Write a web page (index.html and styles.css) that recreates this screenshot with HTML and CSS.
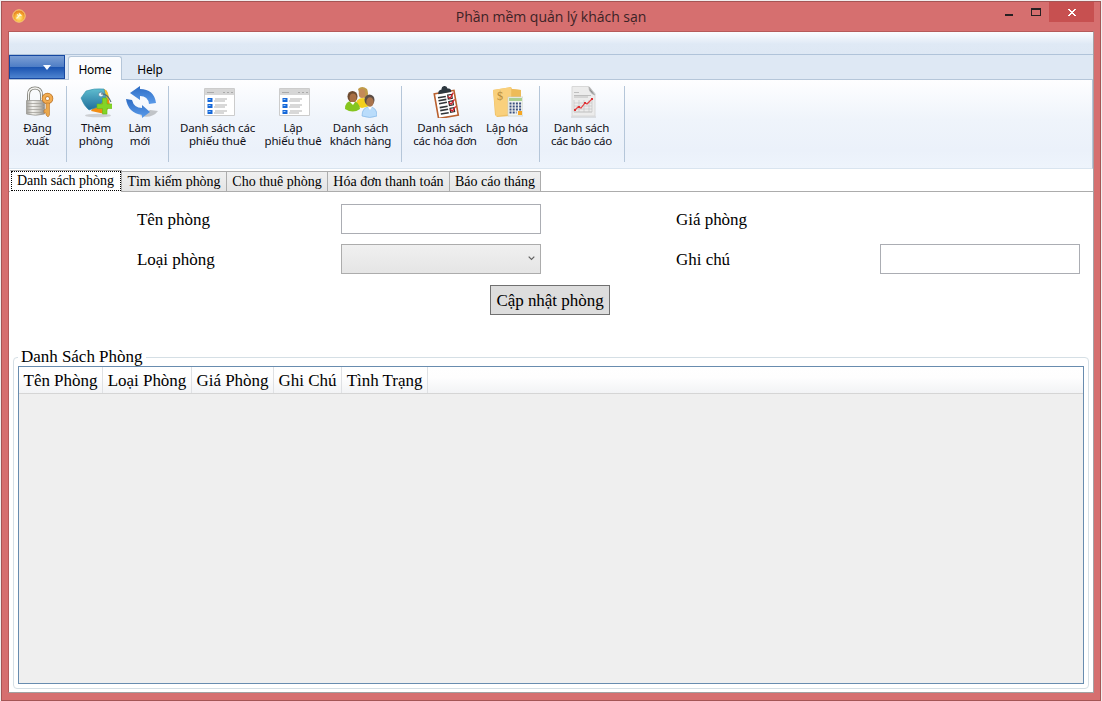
FILE: index.html
```html
<!DOCTYPE html>
<html lang="vi">
<head>
<meta charset="utf-8">
<title>Phần mềm quản lý khách sạn</title>
<link rel="stylesheet" href="styles.css">
</head>
<body>
<div class="window">
  <header class="titlebar">
    <svg class="app-icon" width="14" height="14" viewBox="0 0 14 14"><defs><radialGradient id="orb" cy=".65"><stop offset="0" stop-color="#fff08a"/><stop offset=".65" stop-color="#f9b536"/><stop offset="1" stop-color="#e98925"/></radialGradient></defs><circle cx="7" cy="7" r="6.2" fill="url(#orb)" stroke="#f7cf7c"/><path d="M4.500 9.500l4-4M7 4.500l2.500 2.500M5 5.500l1.500 1" stroke="#fff7d5" stroke-width="1.200"/></svg>
    <h1 class="title">Phần mềm quản lý khách sạn</h1>
    <svg class="controls" width="89" height="21" viewBox="0 0 89 21" shape-rendering="crispEdges"><path fill="#272022" d="M0 13h8v2H0z"/><path fill="#272022" fill-rule="evenodd" d="M26 7h10v8H26zM27 9v5h8V9z"/><path fill="#c75050" d="M44 1h45v20H44z"/><path fill="#fff" d="M63 8h2v1h1v1h2V9h1V8h2v1h-1v1h-1v1h-1v1h1v1h1v1h1v1h-2v-1h-1v-1h-2v1h-1v1h-2v-1h1v-1h1v-1h1v-1h-1v-1h-1V9h-1z"/></svg>
  </header>
  <main class="client">
    <div class="quickbar"></div>
    <nav class="ribbon-tabs">
      <button class="app-menu"><svg width="8" height="5" viewBox="0 0 8 5"><path d="M0 0h8L4 5z" fill="#f7faff"/></svg></button>
      <span class="rtab active">Home</span>
      <span class="rtab">Help</span>
    </nav>
    <section class="ribbon">
      <div class="group g-logout">
        <div class="tool">
          <svg width="32" height="32" viewBox="0 0 32 32"><defs><linearGradient id="steel"><stop stop-color="#a09e99"/><stop offset=".35" stop-color="#f3f2ee"/><stop offset=".7" stop-color="#c9c7c1"/><stop offset="1" stop-color="#8b8984"/></linearGradient></defs><path d="M6.500 15V9q0-7 6.500-7t6.500 7v6" fill="none" stroke="#77776f" stroke-width="3"/><path d="M6.500 15V9q0-7 6.500-7t6.500 7v6" fill="none" stroke="#f3f3f0" stroke-width="1.400"/><path d="M4.500 14.500h18V28q-9 2.500-18 0z" fill="url(#steel)" stroke="#9b9994" stroke-width=".8"/><path d="M5 17.500h17M5 20.500h17M5 23.500h17M5 26.500h17" stroke="#a3a19b" stroke-width=".8"/><circle cx="25.500" cy="12.500" r="3.700" fill="none" stroke="#b9742b" stroke-width="4.200"/><circle cx="25.500" cy="12.500" r="3.700" fill="none" stroke="#f3ad52" stroke-width="2.800"/><path d="M24 17h3.500v12l-1.500 2-2-2v-2h-2v-3l2-1z" fill="#eba84c" stroke="#b9742b" stroke-width=".6"/></svg>
          <p>Đăng<br>xuất</p>
        </div>
      </div>
      <div class="group g-rooms">
        <div class="tool w58">
          <svg width="32" height="32" viewBox="0 0 32 32"><defs><linearGradient id="tag" x2="0" y2="1"><stop stop-color="#5fbdcf"/><stop offset="1" stop-color="#1f6d9b"/></linearGradient></defs><ellipse cx="18" cy="29.500" rx="13" ry="1.800" fill="#aaa" opacity=".5"/><path d="M24 3l3 2 3 14-5 9-14-3z" fill="#f28c12"/><path d="M24 3q4 2 5 8l-3 4z" fill="#f9c52b"/><path d="M1 12L6 5q8-3 18-2l2 9-8 9-9 3q-5-4-8-12z" fill="url(#tag)" stroke="#3391ab" stroke-width=".6"/><circle cx="21" cy="8.500" r="2.500" fill="#eaf5fa" stroke="#5794ab"/><path d="M21 8q6-1 10 8" fill="none" stroke="#556e79" stroke-width="1.100"/><path d="M22.500 12h4.500v6h5.500v4.500H27V28h-4.500v-5.500H17V18h5.500z" fill="#83d427" stroke="#6ab91a" stroke-width=".6"/></svg>
          <p>Thêm<br>phòng</p>
        </div>
        <div class="tool w30">
          <svg class="sync" width="32" height="32" viewBox="0 0 32 32"><defs><linearGradient id="sync" x2="0" y2="1"><stop stop-color="#2d6cc4"/><stop offset="1" stop-color="#5a9bea"/></linearGradient></defs><path d="M14 30q12 3 18-5l-8-1z" fill="#8f9294" opacity=".5"/><path d="M4 7l10-7v3q14 0 16 14l-7 1q-1-8-9-8v4z" fill="url(#sync)"/><path d="M0 13l6 1q2 8 10 8v-3l8 7-8 6v-3Q2 27 0 13z" fill="url(#sync)"/></svg>
          <p>Làm<br>mới</p>
        </div>
      </div>
      <div class="group g-rent">
        <div class="tool w83">
          <svg class="nudge" width="32" height="32" viewBox="0 0 32 32"><g id="form"><path d="M1.500 2.500h30v27h-30z" fill="#fff" stroke="#ccc"/><path d="M2 3h29v6H2z" fill="#d6d6d6"/><path d="M4 6.500h7M20 6.500h2M24 6.500h2M28 6.500h2" stroke="#aaa"/><path d="M4.500 12h5v4h-5zM4.500 18h5v4h-5zM4.500 24h5v4h-5z" fill="#1668d9"/><path d="M5.500 13h2v1h-2zM5.500 19h2v1h-2zM5.500 25h2v1h-2z" fill="#9cc9f7"/><path d="M12 13h12M11 15h11M12 19h12M11 21h11M12 25h12M11 27h10" stroke="#ccc" stroke-width="1.400"/></g></svg>
          <p>Danh sách các<br>phiếu thuê</p>
        </div>
        <div class="tool w68">
          <svg class="nudge" width="32" height="32" viewBox="0 0 32 32"><use href="#form"/></svg>
          <p>Lập<br>phiếu thuê</p>
        </div>
        <div class="tool w67">
          <svg width="32" height="32" viewBox="0 0 32 32"><path d="M10 20q1-8 8-8t7 8l-8 2z" fill="#f3cf1d"/><path d="M13 3q4-4 9 0 2 4 0 10l-7-3z" fill="#bf9a48"/><ellipse cx="17" cy="7.500" rx="3.300" ry="4.500" fill="#c48a57"/><path d="M0 23q0-8 7-8t8 8q-7 5-15 0z" fill="#86c51f"/><ellipse cx="7.500" cy="10.500" rx="5" ry="5.500" fill="#6e4b30"/><ellipse cx="8" cy="12" rx="3.500" ry="4.500" fill="#a96f44"/><path d="M17 30q0-9 7.500-9t7.500 9q-7 3-15 0z" fill="#b9dcfb" stroke="#82b6e6" stroke-width=".7"/><ellipse cx="24.500" cy="14" rx="5" ry="5.500" fill="#5b4d46"/><ellipse cx="25" cy="16" rx="3.700" ry="4.700" fill="#aa744d"/><path d="M5 16l3 3 2-3M23 21l2 3 2-3" fill="#fff"/></svg>
          <p>Danh sách<br>khách hàng</p>
        </div>
      </div>
      <div class="group g-bills">
        <div class="tool w72">
          <svg width="32" height="32" viewBox="0 0 32 32"><g transform="rotate(-10 17 17)"><path d="M7 6h20v25H7z" fill="#fff" stroke="#b9602f" stroke-width="1.600"/><path d="M11 7q0-4 4-4 0-3 3-3t3 3q4 0 3 4z" fill="#2d373f"/><path d="M10 10.500h8M10 13.500h8M10 16.500h8M10 20.500h8M10 23.500h8M10 27h8" stroke="#303438" stroke-width="1.600"/><path d="M20 9.500h4v4h-4zM20 16h4v4h-4zM20 23h4v4h-4z" fill="none" stroke="#332b2b" stroke-width="1.200"/><path d="M20 11l2 2 4-5M20 17l2 2 4-4M20 24l2 2 4-4" fill="none" stroke="#d41e29" stroke-width="1.300"/></g></svg>
          <p>Danh sách<br>các hóa đơn</p>
        </div>
        <div class="tool w52">
          <svg width="32" height="32" viewBox="0 0 32 32"><path d="M2 4l18-3 1 2 9 1v25L6 31l-2-2z" fill="#efc064"/><path d="M2 4l18-3v27L5 30z" fill="#f9d07c"/><path d="M21 3l9 1v25l-10 1z" fill="#edbb59"/><text class="dollar" x="6" y="14">$</text><path d="M17 11h15v19H17z" fill="#f2f4f0" stroke="#c9cec4" stroke-width=".7"/><path d="M18 12h13v3H18z" fill="#a9cf90"/><path d="M18.500 17.500h12M18.500 20.500h12M18.500 23.500h12M18.500 26.500h7" stroke="#3b5180" stroke-width="1.900" stroke-dasharray="2 1.200"/><path d="M27 25h4v4h-4z" fill="#f6a623"/></svg>
          <p>Lập hóa<br>đơn</p>
        </div>
      </div>
      <div class="group g-reports">
        <div class="tool w73">
          <svg width="32" height="32" viewBox="0 0 32 32"><path d="M5 31h25" stroke="#aaa" opacity=".6"/><path d="M6 .5h17l6 7V30H6z" fill="#ececec" stroke="#d8d8d8"/><path d="M23 1q0 6 6 8L23 1z" fill="#888" stroke="#b5b5b5"/><path d="M8 6.500h5M8 9.500h17M8 11h14" stroke="#b3b3b3" stroke-width=".8"/><path d="M8 14v12h18V14M8 17h18M8 20h18M8 23h18M8 26h18M13 14v12M18 14v12M23 14v12" fill="none" stroke="#c5c5c5" stroke-width=".7"/><path d="M9 24l3-3 3 1 4-5 2 1 5-5" fill="none" stroke="#e54042" stroke-width="1.200"/><path d="M8 23h2v2H8zM12 20h2v2h-2zM18 16h2v2h-2zM25 12h2v2h-2z" fill="#dc3032"/></svg>
          <p>Danh sách<br>các báo cáo</p>
        </div>
      </div>
    </section>
    <nav class="page-tabs">
      <span class="ptab selected">Danh sách phòng</span>
      <span class="ptab t2">Tìm kiếm phòng</span>
      <span class="ptab t3">Cho thuê phòng</span>
      <span class="ptab t4">Hóa đơn thanh toán</span>
      <span class="ptab t5">Báo cáo tháng</span>
    </nav>
    <section class="page">
      <div class="form">
        <label>Tên phòng</label><input class="field" type="text"><label>Giá phòng</label><span></span>
        <label>Loại phòng</label><div class="field combo"><svg width="7" height="5" viewBox="0 0 7 5"><path d="M.7.7l2.800 2.800L6.300.7" fill="none" stroke="#606060" stroke-width="1.200"/></svg></div><label>Ghi chú</label><input class="field" type="text">
      </div>
      <button class="update">Cập nhật phòng</button>
      <fieldset class="rooms">
        <legend>Danh Sách Phòng</legend>
        <div class="list">
          <div class="head"><span class="c1">Tên Phòng</span><span class="c2">Loại Phòng</span><span class="c3">Giá Phòng</span><span class="c4">Ghi Chú</span><span class="c5">Tình Trạng</span></div>
        </div>
      </fieldset>
    </section>
  </main>
</div>
</body>
</html>
```
FILE: styles.css
```css
* { box-sizing: border-box; }
body { margin: 0; padding: 1px 1px 0; width: 1102px; height: 701px; overflow: hidden; background: #f0eeee; color: #000; }
button { font: inherit; border-radius: 0; margin: 0; }
p { margin: 0; }
.window { width: 1100px; height: 700px; padding: 0 6px 7px; background: #d66f6f; border: 1px solid #a55555; }
.titlebar { height: 29px; display: flex; align-items: flex-start; }
.app-icon { margin: 7px 0 0 4px; flex: none; }
.title { flex: 1; margin: 3px 0 0 17px; text-align: center; font: 400 14px/24px "Open Sans", "Noto Sans", sans-serif; letter-spacing: -.04px; color: #3b2326; padding-left: 54px; }
.controls { flex: none; margin-top: -1px; }
.client { height: 662px; border: 1px solid #b65a5a; border-right-color: #a6a0a3; border-bottom-color: #a2a0a0; background: #fff; display: flex; flex-direction: column; }
.quickbar { height: 23px; flex: none; background: linear-gradient(#fafcff, #dfe9f5 55%, #dee8f4); border-bottom: 1px solid #b0c3d9; }
.ribbon-tabs { height: 25px; flex: none; display: flex; align-items: flex-end; background: #dee8f4; border-bottom: 1px solid #b5c6d9; font: 12px/24px "Noto Sans", sans-serif; }
.app-menu { width: 56px; height: 24px; align-self: flex-start; border: 1px solid #1748a1; background: linear-gradient(#7c9fd5, #4f7ec6 48%, #1b54b1 52%, #4e84d0); padding: 0 0 0 20px; display: flex; align-items: center; justify-content: center; }
.rtab { height: 23px; width: 56px; text-align: center; letter-spacing: -.15px; padding-top: 2px; }
.rtab.active { height: 24px; width: 54px; margin: 0 0 -1px 3px; padding-top: 1px; letter-spacing: -.3px; background: #fbfcfe; border: 1px solid #b5c6d9; border-bottom: 0; border-radius: 3px 3px 0 0; }
.ribbon { height: 89px; flex: none; display: flex; padding-top: 6px; background: linear-gradient(#fefeff, #eff4fb 45%, #ebf1fa 80%, #eef4fc); border-right: 1px solid #b5c6d9; border-bottom: 1px solid #d9e4ef; }
.group { height: 76px; display: flex; border-right: 1px solid #b5c6d9; }
.g-logout { width: 58px; padding-left: 1px; }
.g-rooms { width: 102px; }
.g-rent { width: 233px; padding-left: 7px; }
.g-bills { width: 138px; padding-left: 7px; }
.g-reports { width: 85px; padding-left: 5px; }
.tool { width: 55px; flex: none; display: flex; flex-direction: column; align-items: center; font: 11.500px/13px "Noto Sans", sans-serif; text-align: center; white-space: nowrap; color: #101018; letter-spacing: -.15px; }
.tool svg { flex: none; }
.tool .sync { margin: 0 -4px 0 0; }
.tool .nudge { margin-left: 2px; }
.tool p { margin-top: 3px; }
.w58 { width: 58px; }
.w30 { width: 30px; }
.w83 { width: 83px; }
.w68 { width: 68px; }
.w67 { width: 67px; }
.w72 { width: 72px; }
.w52 { width: 52px; }
.w73 { width: 73px; }
.tool .sync { margin: 0 0 0 4px; }
.dollar { font: 12px "Liberation Serif", serif; fill: #b58a3a; }
.page-tabs { height: 23px; flex: none; display: flex; align-items: flex-end; border-bottom: 1px solid #acacac; padding-left: 1px; font: 14px/20px "Liberation Serif", serif; letter-spacing: -.01px; white-space: nowrap; }
.ptab { height: 21px; border: 1px solid #acacac; border-left-width: 0; background: linear-gradient(#f0f0f0, #e5e5e5); text-align: center; margin-bottom: -1px; }
.ptab.selected { width: 112px; height: 22px; border-bottom: 0; background: #fff; outline: 1px dotted #000; outline-offset: -2px; }
.t2 { width: 105px; }
.t3 { width: 101px; }
.t4 { width: 122px; }
.t5 { width: 91px; }
.page { flex: 1; min-height: 0; padding: 12px 3px 3px 4px; display: flex; flex-direction: column; font: 17px/18px "Liberation Serif", serif; letter-spacing: -.03px; }
.form { display: grid; grid-template-columns: 204px 335px 204px 200px; grid-template-rows: 30px 30px; row-gap: 10px; padding-left: 124px; align-items: center; flex: none; }
.form label { padding-top: 1px; }
.field { width: 200px; height: 30px; border: 1px solid #abadb3; background: #fff; padding: 0; margin: 0; border-radius: 0; }
.combo { border-color: #acacac; background: linear-gradient(#f0f0f0, #e5e5e5); display: flex; align-items: center; justify-content: flex-end; padding: 0 5px 1px 0; }
.update { width: 120px; height: 30px; margin: 11px 0 0 477px; padding: 1px 0 0; border: 1px solid #707070; background: #ddd; flex: none; color: #000; white-space: nowrap; letter-spacing: -.03px; }
.rooms { flex: 1; min-height: 0; min-width: 0; margin: 33px 1px 0 0; padding: 0 4px 4px; border: 1px solid #d5dfe5; border-radius: 4px; }
.rooms legend { padding: 0 4px 0 3px; height: 18px; }
.list { height: 318px; border: 1px solid #688caf; background: #efefef; }
.head { height: 27px; display: flex; background: linear-gradient(#fff, #fefefe 40%, #f2f3f5); border-bottom: 1px solid #d5d5d5; line-height: 27px; }
.head span { text-align: center; border-right: 1px solid #dfe1e4; white-space: nowrap; }
.c1 { width: 84px; }
.c2 { width: 89px; }
.c3 { width: 82px; }
.c4 { width: 68px; }
.c5 { width: 86px; }
```
